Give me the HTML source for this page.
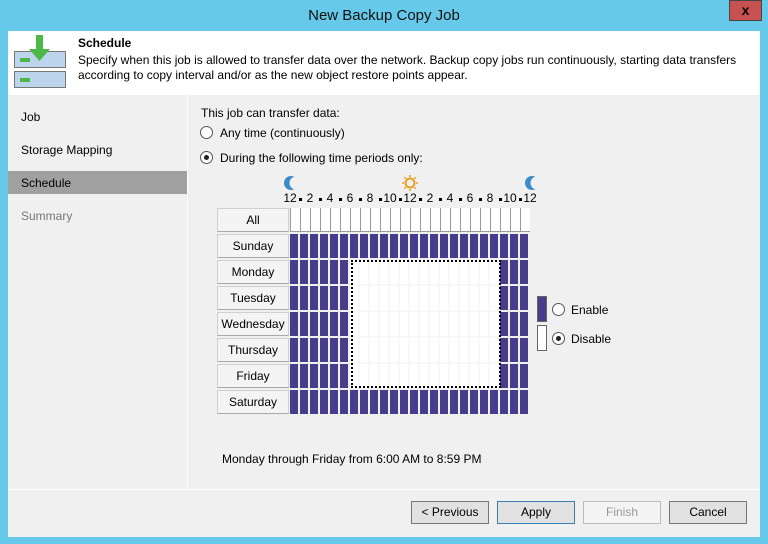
<!DOCTYPE html>
<html><head><meta charset="utf-8"><style>
*{margin:0;padding:0;box-sizing:border-box}
body{width:768px;height:544px;background:#66c9e9;font-family:"Liberation Sans",sans-serif;font-size:12px;color:#000;position:relative;overflow:hidden}
.a{position:absolute}
.t{white-space:nowrap}
.radio{position:absolute;width:13px;height:13px;border:1px solid #555;border-radius:50%;background:#fff}
.radio.on::after{content:"";position:absolute;left:3px;top:3px;width:5px;height:5px;border-radius:50%;background:#222}
.btn{position:absolute;top:501px;height:23px;width:78px;border:1px solid #777;background:#e1e1e1;text-align:center;line-height:21px}
.lab{position:absolute;left:217px;width:72px;height:24px;background:#f4f4f4;border:1px solid #d0d0d0;border-bottom-color:#a8a8a8;text-align:center;line-height:22px}
</style></head><body>
<div class="a t" style="left:0;top:7px;width:768px;text-align:center;font-size:15px;color:#111">New Backup Copy Job</div>
<div class="a" style="left:729px;top:0;width:33px;height:21px;background:#c75050;border:1px solid #444;color:#000;font-weight:bold;text-align:center;line-height:18px;font-size:14px">x</div>
<div class="a" style="left:8px;top:31px;width:752px;height:506px;background:#f0f0f0"></div>
<div class="a" style="left:8px;top:31px;width:752px;height:64px;background:#fff"></div>
<!-- icon -->
<div class="a" style="left:14px;top:51px;width:52px;height:17px;background:#bcd5ec;border:1px solid #777"></div>
<div class="a" style="left:20px;top:58px;width:10px;height:4px;background:#4db848"></div>
<div class="a" style="left:14px;top:71px;width:52px;height:17px;background:#bcd5ec;border:1px solid #777"></div>
<div class="a" style="left:20px;top:78px;width:10px;height:4px;background:#4db848"></div>
<svg class="a" style="left:25px;top:35px" width="30" height="32"><path d="M11 0h7v14h7l-10.5 12L4 14h7z" fill="#4db848"/></svg>
<div class="a t" style="left:78px;top:36px;font-weight:bold">Schedule</div>
<div class="a" style="left:78px;top:53px;width:680px;line-height:15px">Specify when this job is allowed to transfer data over the network. Backup copy jobs run continuously, starting data transfers according to copy interval and/or as the new object restore points appear.</div>
<!-- nav -->
<div class="a" style="left:187px;top:95px;width:1px;height:394px;background:#fff"></div>
<div class="a t" style="left:21px;top:110px">Job</div>
<div class="a t" style="left:21px;top:143px">Storage Mapping</div>
<div class="a" style="left:8px;top:171px;width:179px;height:23px;background:#a0a0a0"></div>
<div class="a t" style="left:21px;top:176px">Schedule</div>
<div class="a t" style="left:21px;top:209px;color:#777">Summary</div>
<!-- content -->
<div class="a t" style="left:201px;top:106px">This job can transfer data:</div>
<div class="radio" style="left:200px;top:126px"></div>
<div class="a t" style="left:220px;top:126px">Any time (continuously)</div>
<div class="radio on" style="left:200px;top:151px"></div>
<div class="a t" style="left:220px;top:151px">During the following time periods only:</div>
<svg class="a" style="left:284px;top:175px" width="14" height="16"><circle cx="7" cy="8" r="7" fill="#3a8cc8"/><circle cx="12" cy="8" r="6.5" fill="#f0f0f0"/></svg>
<svg class="a" style="left:525px;top:175px" width="14" height="16"><circle cx="7" cy="8" r="7" fill="#3a8cc8"/><circle cx="12" cy="8" r="6.5" fill="#f0f0f0"/></svg>
<svg class="a" style="left:402px;top:175px" width="16" height="16"><circle cx="8" cy="8" r="4.5" fill="none" stroke="#e8a020" stroke-width="2"/><g stroke="#e8a020" stroke-width="1.5"><path d="M8 0v2M8 14v2M0 8h2M14 8h2M2.3 2.3l1.4 1.4M12.3 12.3l1.4 1.4M2.3 13.7l1.4-1.4M12.3 3.7l1.4-1.4"/></g></svg>
<div id="g"></div>
<div class="lab" style="top:208px">All</div>
<div class="lab" style="top:234px">Sunday</div>
<div class="lab" style="top:260px">Monday</div>
<div class="lab" style="top:286px">Tuesday</div>
<div class="lab" style="top:312px">Wednesday</div>
<div class="lab" style="top:338px">Thursday</div>
<div class="lab" style="top:364px">Friday</div>
<div class="lab" style="top:390px">Saturday</div>
<div class="a" style="left:351px;top:260px;width:150px;height:128px;border:2px dotted #000"></div>
<div class="a" style="left:537px;top:296px;width:10px;height:26px;background:#483d8b;border:1px solid #666"></div>
<div class="a" style="left:537px;top:325px;width:10px;height:26px;background:#fff;border:1px solid #666"></div>
<div class="radio" style="left:552px;top:303px"></div>
<div class="a t" style="left:571px;top:303px">Enable</div>
<div class="radio on" style="left:552px;top:332px"></div>
<div class="a t" style="left:571px;top:332px">Disable</div>
<div class="a t" style="left:222px;top:452px">Monday through Friday from 6:00 AM to 8:59 PM</div>
<div class="a" style="left:8px;top:489px;width:752px;height:1px;background:#fff"></div>
<div class="btn" style="left:411px">&lt; Previous</div>
<div class="btn" style="left:497px;border-color:#3c7fb1">Apply</div>
<div class="btn" style="left:583px;border-color:#bbb;background:#f4f4f4;color:#999">Finish</div>
<div class="btn" style="left:669px">Cancel</div>
<script>
var h='';
var labs=['12','2','4','6','8','10','12','2','4','6','8','10','12'];
for(var k=0;k<=12;k++){h+='<div class="a t" style="left:'+(290+20*k-10)+'px;top:191px;width:20px;text-align:center">'+labs[k]+'</div>';
if(k<12)h+='<div class="a" style="left:'+(299+20*k)+'px;top:198px;width:3px;height:3px;background:#000"></div>';}
for(var c=0;c<24;c++){var x=290+10*c;
h+='<div class="a" style="left:'+x+'px;top:208px;width:10px;height:24px;border-left:1px solid #999;border-bottom:1px solid #999;background:#fff"></div>';
for(var r=0;r<7;r++){var y=234+26*r;var w=(r>=1&&r<=5&&c>=6&&c<21);
h+='<div class="a" style="left:'+x+'px;top:'+y+'px;width:8px;height:24px;background:'+(w?'#fff':'#483d8b')+'"></div>';
if(w)h+='<div class="a" style="left:'+(x+8)+'px;top:'+y+'px;width:2px;height:26px;background:#f0f0f0"></div><div class="a" style="left:'+x+'px;top:'+(y+24)+'px;width:10px;height:2px;background:#f0f0f0"></div>';}}
h+='<div class="a" style="left:353px;top:262px;width:146px;height:124px;background:rgba(255,255,255,0.55)"></div>';
document.getElementById('g').innerHTML=h;
</script>
</body></html>
